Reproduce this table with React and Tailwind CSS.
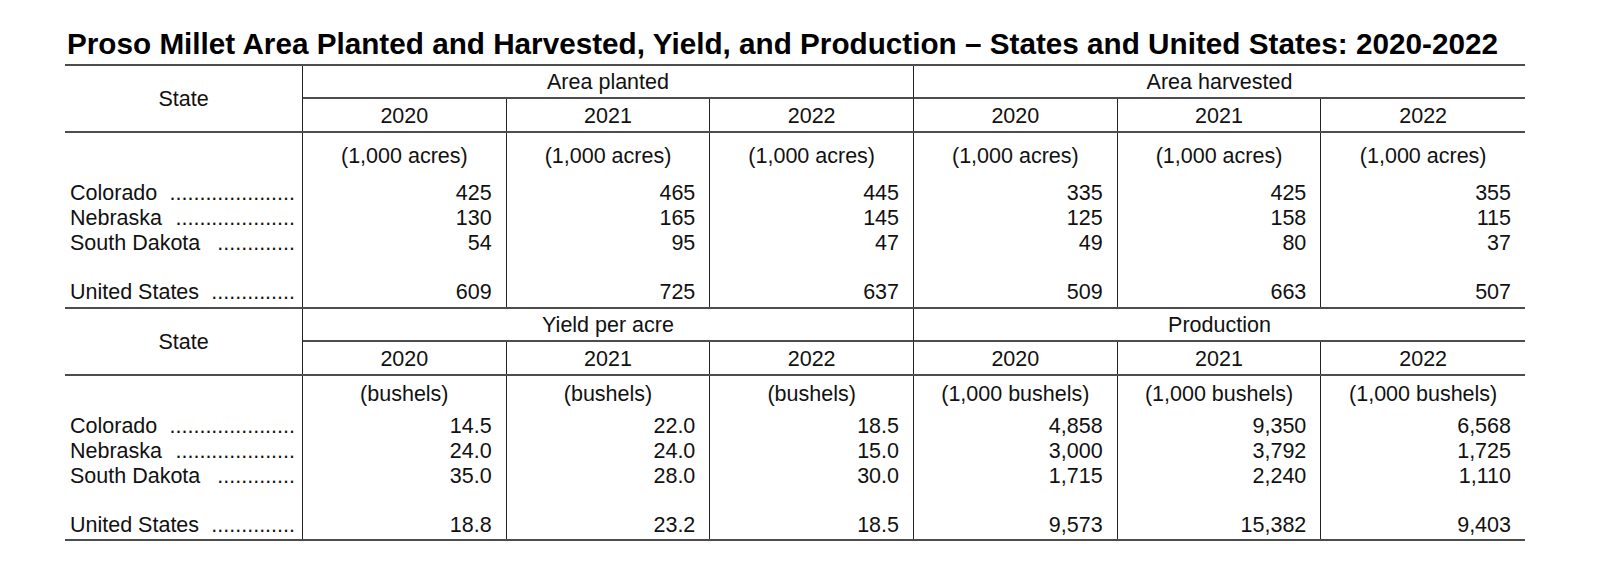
import React from "react";

const dots = { Colorado: 21, Nebraska: 20, "South Dakota": 13, "United States": 14 };

const sections = [
  {
    groups: ["Area planted", "Area harvested"],
    units: ["(1,000 acres)", "(1,000 acres)", "(1,000 acres)", "(1,000 acres)", "(1,000 acres)", "(1,000 acres)"],
    rows: [
      ["Colorado", "425", "465", "445", "335", "425", "355"],
      ["Nebraska", "130", "165", "145", "125", "158", "115"],
      ["South Dakota", "54", "95", "47", "49", "80", "37"],
    ],
    total: ["United States", "609", "725", "637", "509", "663", "507"],
    bodyPad: "pt-[11px] pb-[2px]",
    unitsGap: "mb-[12px]",
    last: "",
  },
  {
    groups: ["Yield per acre", "Production"],
    units: ["(bushels)", "(bushels)", "(bushels)", "(1,000 bushels)", "(1,000 bushels)", "(1,000 bushels)"],
    rows: [
      ["Colorado", "14.5", "22.0", "18.5", "4,858", "9,350", "6,568"],
      ["Nebraska", "24.0", "24.0", "15.0", "3,000", "3,792", "1,725"],
      ["South Dakota", "35.0", "28.0", "30.0", "1,715", "2,240", "1,110"],
    ],
    total: ["United States", "18.8", "23.2", "18.5", "9,573", "15,382", "9,403"],
    bodyPad: "pt-[6px] pb-[1px]",
    unitsGap: "mb-[7px]",
    last: "border-b-2 border-b-[#4d4d4d]",
  },
];

const years = ["2020", "2021", "2022", "2020", "2021", "2022"];

const StateName = ({ name }) => (
  <div className="flex h-[25px] items-center justify-between whitespace-nowrap">
    <span>{name}</span>
    <span>{".".repeat(dots[name])}</span>
  </div>
);

const Section = ({ data }) => (
  <div className={`border-t-2 border-t-[#4d4d4d] ${data.last}`}>
    {/* header */}
    <div className="grid grid-cols-[238px_repeat(6,1fr)] border-b-2 border-[#4d4d4d]">
      <div className="row-span-2 flex items-center justify-center border-r border-[#222] pt-[2px]">State</div>
      <div className="col-span-3 flex h-[33px] items-center justify-center border-b-2 border-r border-[#4d4d4d] border-r-[#222] pt-[2px]">
        {data.groups[0]}
      </div>
      <div className="col-span-3 flex h-[33px] items-center justify-center border-b-2 border-[#4d4d4d] pt-[2px]">
        {data.groups[1]}
      </div>
      {years.map((y, i) => (
        <div
          key={i}
          className={`flex h-[32px] items-center justify-center pt-[2px] ${i < 5 ? "border-r border-[#222]" : ""}`}
        >
          {y}
        </div>
      ))}
    </div>

    {/* body */}
    <div className="grid grid-cols-[238px_repeat(6,1fr)]">
      <div className={`border-r border-[#222] pl-[5px] pr-[7px] ${data.bodyPad}`}>
        <div className={`h-[25px] ${data.unitsGap}`}></div>
        {data.rows.map((r) => (
          <StateName key={r[0]} name={r[0]} />
        ))}
        <div className="h-[24px]"></div>
        <StateName name={data.total[0]} />
      </div>
      {data.units.map((u, c) => (
        <div
          key={c}
          className={`pr-[14px] text-right ${data.bodyPad} ${c < 5 ? "border-r border-[#222]" : ""}`}
        >
          <div className={`flex h-[25px] items-center justify-center pl-[14px] ${data.unitsGap}`}>{u}</div>
          {data.rows.map((r) => (
            <div key={r[0]} className="h-[25px] leading-[25px]">
              {r[c + 1]}
            </div>
          ))}
          <div className="h-[24px]"></div>
          <div className="h-[25px] leading-[25px]">{data.total[c + 1]}</div>
        </div>
      ))}
    </div>
  </div>
);

export default function App() {
  return (
    <div className="h-[570px] w-[1600px] bg-white font-['Liberation_Sans',Arial,sans-serif] text-[21.5px] leading-[25px] text-[#111]">
      <div className="ml-[65px] w-[1460px] pt-[27px]">
        <h1 className="mb-[4px] pl-[2px] text-[29.7px] font-bold leading-[33px] text-black">
          Proso Millet Area Planted and Harvested, Yield, and Production – States and United States: 2020-2022
        </h1>
        {sections.map((s, i) => (
          <Section key={i} data={s} />
        ))}
      </div>
    </div>
  );
}
